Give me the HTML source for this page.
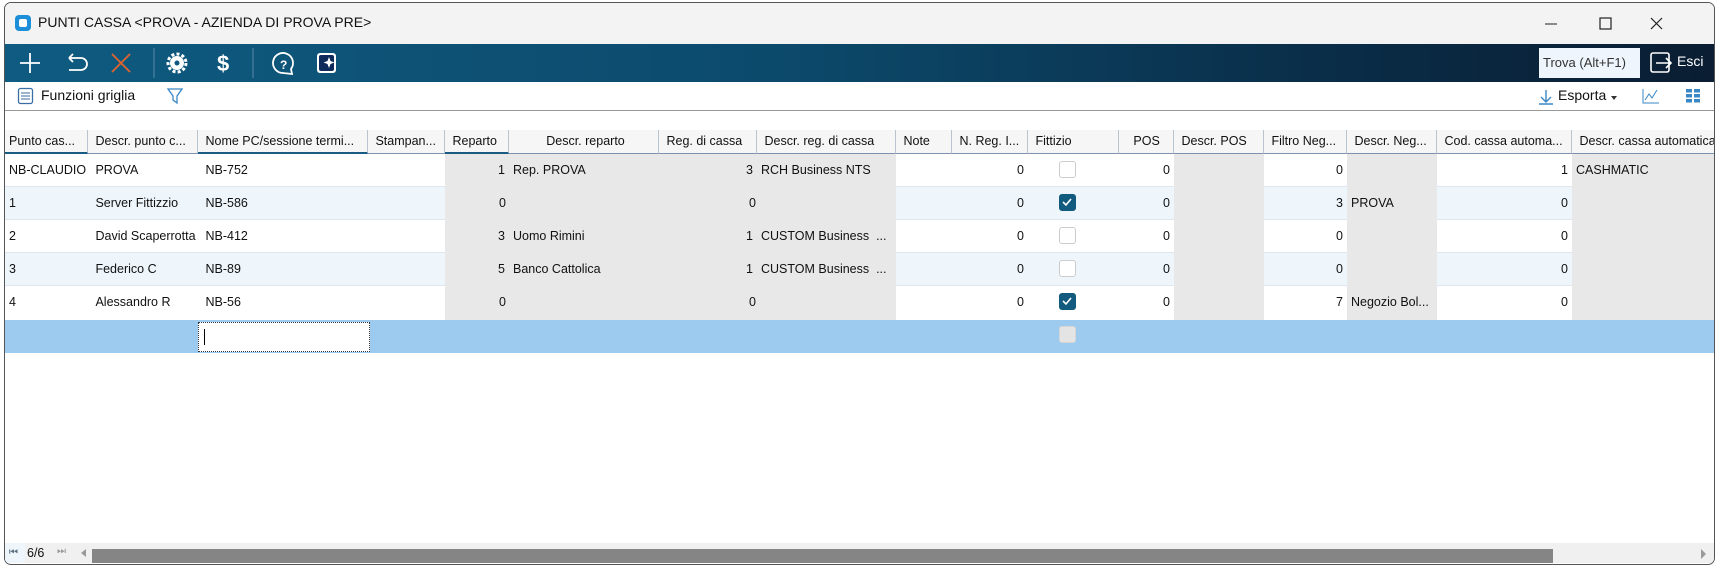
<!DOCTYPE html>
<html><head><meta charset="utf-8"><style>
*{box-sizing:border-box;margin:0;padding:0}
body{width:1718px;height:568px;background:#fff;font-family:"Liberation Sans",sans-serif;position:relative;overflow:hidden;color:#111}
.win{position:absolute;left:4px;top:2px;width:1711px;height:563px;border:1px solid #555;border-radius:7px;background:#fff;overflow:hidden}
.title{position:absolute;left:0;top:0;width:100%;height:41px;background:#f3f3f3}
.tb{position:absolute;left:0;top:41px;width:100%;height:38px;background:linear-gradient(90deg,#0f5b81 0%,#0c4a6c 45%,#0a2b45 80%,#0a1d32 100%)}
.abs{position:absolute}
.hdr{position:absolute;top:127px;height:24px;border-right:1px solid #b8c4d0;border-bottom:1px solid #7b93ab;background:#f6f6f6;font-size:12.5px;line-height:23px;padding-left:4px;white-space:nowrap;overflow:hidden}
.hdr.sel{border-bottom:2px solid #1a5b84}
.cell{position:absolute;height:33px;font-size:12.5px;line-height:32px;white-space:nowrap;overflow:hidden;padding:0 4px}
.r{text-align:right}
.cb{position:absolute;width:17px;height:17px;border:1.5px solid #ccc;border-radius:3px;background:#fff}
.cb.on{background:#125a7e;border-color:#125a7e}
</style></head><body>
<div class="win">
<div class="title"></div>
<div class="abs" style="left:10px;top:12px;width:16px;height:16px;border-radius:4px;background:#1c8fd8"><div style="position:absolute;left:4px;top:4px;width:8px;height:8px;border-radius:2px;background:#fff"></div></div>
<div class="abs" style="left:33px;top:11px;font-size:14px">PUNTI CASSA &lt;PROVA - AZIENDA DI PROVA PRE&gt;</div>
<svg class="abs" style="left:1540px;top:10px" width="160" height="22"><line x1="0" y1="11" x2="12" y2="11" stroke="#222"/><rect x="55" y="5" width="11" height="11" fill="none" stroke="#222" stroke-width="1.2"/><path d="M106 5 L117 16 M117 5 L106 16" stroke="#222" stroke-width="1.2"/></svg>
<div class="tb"></div>
<svg class="abs" style="left:0;top:41px" width="360" height="38">
<path d="M15 19h20M25 9v20" stroke="#fff" stroke-width="1.8"/>
<path d="M64 14h12a6 6 0 0 1 0 12h-12M64 14l4-4M64 14l4 4" stroke="#fff" stroke-width="1.8" fill="none"/>
<path d="M107 10l18 18M125 10l-18 18" stroke="#e0652c" stroke-width="1.8"/>
<line x1="149" y1="4" x2="149" y2="34" stroke="#5a88a5"/>
<circle cx="172" cy="19" r="7" fill="#fff"/><circle cx="172" cy="19" r="9" fill="none" stroke="#fff" stroke-width="3" stroke-dasharray="3 2.2"/><circle cx="172" cy="19" r="2.5" fill="#0f5780"/>
<text x="212" y="27" fill="#fff" font-size="22" font-weight="bold" font-family="Liberation Sans">$</text>
<line x1="248" y1="4" x2="248" y2="34" stroke="#5a88a5"/>
<path d="M278 29 a10 10 0 1 1 8-4 l1 5z" fill="none" stroke="#fff" stroke-width="1.8"/>
<text x="275" y="25" fill="#fff" font-size="12" font-weight="bold">?</text>
<rect x="312" y="9" width="19" height="20" rx="3" fill="#fff"/><rect x="314" y="11" width="15" height="16" rx="2" fill="#0d2a5a"/>
<path d="M324 13l1.5 4 4 1.5-4 1.5-1.5 4-1.5-4-4-1.5 4-1.5z" fill="#fff"/>
</svg>
<div class="abs" style="left:1534px;top:45px;width:101px;height:30px;background:#eef5fc;font-size:13px;line-height:30px;padding-left:4px;color:#333">Trova (Alt+F1)</div>
<svg class="abs" style="left:1645px;top:49px" width="24" height="22"><rect x="1" y="1" width="18" height="19" rx="2" fill="none" stroke="#fff" stroke-width="1.6"/><path d="M6 11h15M16 6l5 5-5 5" stroke="#fff" stroke-width="1.6" fill="none"/></svg>
<div class="abs" style="left:1672px;top:50px;color:#fff;font-size:14px">Esci</div>
<svg class="abs" style="left:12px;top:84px" width="18" height="18"><rect x="1.5" y="1.5" width="14" height="15" rx="2" fill="#fff" stroke="#3a6ea5" stroke-width="1.3"/><path d="M4 6h9M4 9h9M4 12h9" stroke="#3a6ea5"/></svg>
<div class="abs" style="left:36px;top:84px;font-size:14px">Funzioni griglia</div>
<svg class="abs" style="left:161px;top:84px" width="18" height="18"><path d="M2 2h14l-5 7v7l-4-3v-4z" fill="none" stroke="#3a87c5" stroke-width="1.3"/></svg>
<svg class="abs" style="left:1532px;top:85px" width="18" height="18"><path d="M9 2v12M4 9l5 5 5-5M2 16h14" stroke="#3a87c5" stroke-width="1.4" fill="none"/></svg>
<div class="abs" style="left:1553px;top:84px;font-size:14px">Esporta</div>
<div class="abs" style="left:1606px;top:93px;border:3px solid transparent;border-top:4px solid #333"></div>
<svg class="abs" style="left:1636px;top:84px" width="20" height="18"><path d="M2 2v14h16" stroke="#3a87c5" fill="none"/><path d="M4 13l4-6 3 4 5-8" stroke="#3a87c5" fill="none"/></svg>
<svg class="abs" style="left:1680px;top:85px" width="16" height="16"><g fill="#3a87c5"><rect x="1" y="1" width="6" height="3.5"/><rect x="9" y="1" width="6" height="3.5"/><rect x="1" y="6" width="6" height="3.5"/><rect x="9" y="6" width="6" height="3.5"/><rect x="1" y="11" width="6" height="3.5"/><rect x="9" y="11" width="6" height="3.5"/></g></svg>
<div class="abs" style="left:0;top:107px;width:100%;height:1px;background:#999"></div>

<!-- headers -->
<div class="hdr sel" style="left:0;width:83px">Punto cas...</div>
<div class="hdr" style="left:83px;width:110px">&nbsp;Descr. punto c...</div>
<div class="hdr sel" style="left:193px;width:170px">&nbsp;Nome PC/sessione termi...</div>
<div class="hdr" style="left:363px;width:77px">&nbsp;Stampan...</div>
<div class="hdr sel" style="left:440px;width:64px">&nbsp;Reparto</div>
<div class="hdr" style="left:504px;width:150px;text-align:center">Descr. reparto</div>
<div class="hdr" style="left:654px;width:98px">&nbsp;Reg. di cassa</div>
<div class="hdr" style="left:752px;width:139px">&nbsp;Descr. reg. di cassa</div>
<div class="hdr" style="left:891px;width:56px">&nbsp;Note</div>
<div class="hdr" style="left:947px;width:76px">&nbsp;N. Reg. I...</div>
<div class="hdr" style="left:1023px;width:91px">&nbsp;Fittizio</div>
<div class="hdr" style="left:1114px;width:55px">&nbsp;&nbsp;&nbsp;POS</div>
<div class="hdr" style="left:1169px;width:90px">&nbsp;Descr. POS</div>
<div class="hdr" style="left:1259px;width:83px">&nbsp;Filtro Neg...</div>
<div class="hdr" style="left:1342px;width:90px">&nbsp;Descr. Neg...</div>
<div class="hdr" style="left:1432px;width:135px">&nbsp;Cod. cassa automa...</div>
<div class="hdr" style="left:1567px;width:150px">&nbsp;Descr. cassa automatica</div>

<!-- row backgrounds -->
<div class="abs" style="left:0;top:151px;width:100%;height:200px">
 <div class="abs" style="top:33px;left:0;width:100%;height:33px;background:#eef6fc"></div>
 <div class="abs" style="top:99px;left:0;width:100%;height:33px;background:#eef6fc"></div>
 <div class="abs" style="top:32px;left:0;width:100%;height:1px;background:#dfe8f0"></div>
 <div class="abs" style="top:65px;left:0;width:100%;height:1px;background:#dfe8f0"></div>
 <div class="abs" style="top:98px;left:0;width:100%;height:1px;background:#dfe8f0"></div>
 <div class="abs" style="top:131px;left:0;width:100%;height:1px;background:#dfe8f0"></div>
 <div class="abs" style="top:0;left:440px;width:451px;height:166px;background:#e8e8e8"></div>
 <div class="abs" style="top:0;left:1169px;width:90px;height:166px;background:#e8e8e8"></div>
 <div class="abs" style="top:0;left:1342px;width:90px;height:166px;background:#e8e8e8"></div>
 <div class="abs" style="top:0;left:1567px;width:150px;height:166px;background:#e8e8e8"></div>
 <div class="abs" style="top:166px;left:0;width:100%;height:33px;background:#9dcbf0"></div>
 <div class="abs" style="top:168px;left:193px;width:172px;height:30px;background:#fff;border:1px dotted #333"></div>
 <div class="abs" style="top:175px;left:199px;width:1px;height:16px;background:#000"></div>
</div>

<div style="position:absolute;left:0;top:151px;width:100%">
<!-- row 1 -->
<div class="cell" style="top:0;left:0">NB-CLAUDIO</div><div class="cell" style="top:0;left:83px">&nbsp;PROVA</div><div class="cell" style="top:0;left:193px">&nbsp;NB-752</div>
<div class="cell r" style="top:0;left:440px;width:64px">1</div><div class="cell" style="top:0;left:504px">Rep. PROVA</div>
<div class="cell r" style="top:0;left:654px;width:98px">3</div><div class="cell" style="top:0;left:752px">RCH Business NTS</div>
<div class="cell r" style="top:0;left:947px;width:76px">0</div><div class="cell r" style="top:0;left:1114px;width:55px">0</div><div class="cell r" style="top:0;left:1259px;width:83px">0</div>
<div class="cell r" style="top:0;left:1432px;width:135px">1</div><div class="cell" style="top:0;left:1567px">CASHMATIC</div>
<!-- row 2 -->
<div class="cell" style="top:33px;left:0">1</div><div class="cell" style="top:33px;left:83px">&nbsp;Server Fittizzio</div><div class="cell" style="top:33px;left:193px">&nbsp;NB-586</div>
<div class="cell" style="top:33px;left:490px">0</div><div class="cell" style="top:33px;left:740px">0</div>
<div class="cell r" style="top:33px;left:947px;width:76px">0</div><div class="cell r" style="top:33px;left:1114px;width:55px">0</div><div class="cell r" style="top:33px;left:1259px;width:83px">3</div><div class="cell" style="top:33px;left:1342px">PROVA</div>
<div class="cell r" style="top:33px;left:1432px;width:135px">0</div>
<!-- row 3 -->
<div class="cell" style="top:66px;left:0">2</div><div class="cell" style="top:66px;left:83px">&nbsp;David Scaperrotta</div><div class="cell" style="top:66px;left:193px">&nbsp;NB-412</div>
<div class="cell r" style="top:66px;left:440px;width:64px">3</div><div class="cell" style="top:66px;left:504px">Uomo Rimini</div>
<div class="cell r" style="top:66px;left:654px;width:98px">1</div><div class="cell" style="top:66px;left:752px">CUSTOM Business &nbsp;...</div>
<div class="cell r" style="top:66px;left:947px;width:76px">0</div><div class="cell r" style="top:66px;left:1114px;width:55px">0</div><div class="cell r" style="top:66px;left:1259px;width:83px">0</div>
<div class="cell r" style="top:66px;left:1432px;width:135px">0</div>
<!-- row 4 -->
<div class="cell" style="top:99px;left:0">3</div><div class="cell" style="top:99px;left:83px">&nbsp;Federico C</div><div class="cell" style="top:99px;left:193px">&nbsp;NB-89</div>
<div class="cell r" style="top:99px;left:440px;width:64px">5</div><div class="cell" style="top:99px;left:504px">Banco Cattolica</div>
<div class="cell r" style="top:99px;left:654px;width:98px">1</div><div class="cell" style="top:99px;left:752px">CUSTOM Business &nbsp;...</div>
<div class="cell r" style="top:99px;left:947px;width:76px">0</div><div class="cell r" style="top:99px;left:1114px;width:55px">0</div><div class="cell r" style="top:99px;left:1259px;width:83px">0</div>
<div class="cell r" style="top:99px;left:1432px;width:135px">0</div>
<!-- row 5 -->
<div class="cell" style="top:132px;left:0">4</div><div class="cell" style="top:132px;left:83px">&nbsp;Alessandro R</div><div class="cell" style="top:132px;left:193px">&nbsp;NB-56</div>
<div class="cell" style="top:132px;left:490px">0</div><div class="cell" style="top:132px;left:740px">0</div>
<div class="cell r" style="top:132px;left:947px;width:76px">0</div><div class="cell r" style="top:132px;left:1114px;width:55px">0</div><div class="cell r" style="top:132px;left:1259px;width:83px">7</div><div class="cell" style="top:132px;left:1342px">Negozio Bol...</div>
<div class="cell r" style="top:132px;left:1432px;width:135px">0</div>
<!-- checkboxes -->
<div class="cb" style="left:1054px;top:7px"></div>
<div class="cb on" style="left:1054px;top:40px"><svg width="14" height="14" style="position:absolute;left:0;top:0"><path d="M3 7l3 3 5-6" stroke="#fff" stroke-width="1.6" fill="none"/></svg></div>
<div class="cb" style="left:1054px;top:73px"></div>
<div class="cb" style="left:1054px;top:106px"></div>
<div class="cb on" style="left:1054px;top:139px"><svg width="14" height="14" style="position:absolute;left:0;top:0"><path d="M3 7l3 3 5-6" stroke="#fff" stroke-width="1.6" fill="none"/></svg></div>
<div class="cb" style="left:1054px;top:172px;background:#e4e4e4;border-color:#d6d6d6"></div>
</div>

<!-- bottom bar -->
<div class="abs" style="left:0;top:540px;width:100%;height:20px;background:#f0f0f0"></div>
<div class="abs" style="left:0;top:540px;width:20px;height:20px;background:#eef6fc;font-size:10px;line-height:20px;color:#5a6d80;padding-left:4px">⏮</div>
<div class="abs" style="left:22px;top:543px;font-size:12.5px">6/6</div>
<div class="abs" style="left:52px;top:543px;font-size:10px;color:#999">⏭</div>
<div class="abs" style="left:72px;top:546px;border:4px solid transparent;border-right:5px solid #999;width:0;height:0"></div>
<div class="abs" style="left:87px;top:546px;width:1461px;height:14px;background:#858585"></div>
<div class="abs" style="left:1696px;top:546px;border:5px solid transparent;border-left:5px solid #999;width:0;height:0"></div>
</div>
</body></html>
